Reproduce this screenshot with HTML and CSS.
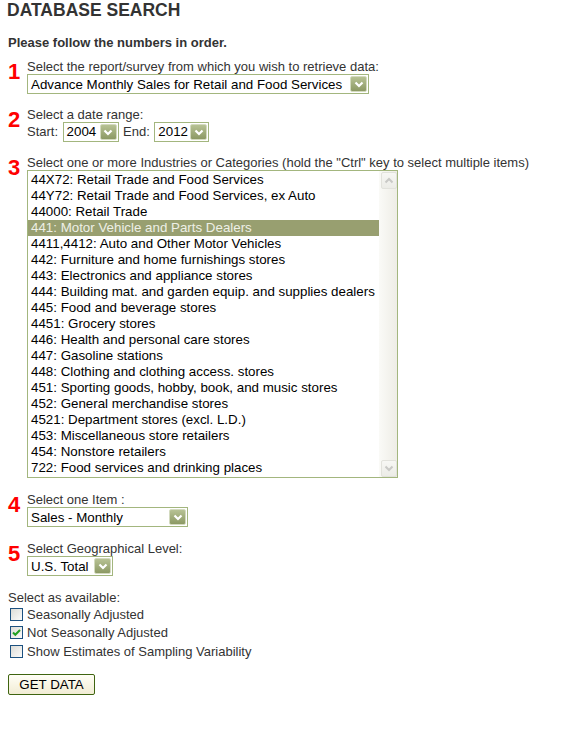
FILE: index.html
```html
<!DOCTYPE html>
<html>
<head>
<meta charset="utf-8">
<title>Database Search</title>
<link rel="stylesheet" href="styles.css">
</head>
<body>
<h1 class="title">DATABASE SEARCH</h1>
<p class="intro">Please follow the numbers in order.</p>

<div class="step">
  <span class="num">1</span>
  <div class="step-body">
    <div class="label">Select the report/survey from which you wish to retrieve data:</div>
    <div class="select w-report">
      <span class="val">Advance Monthly Sales for Retail and Food Services</span>
      <span class="arrow"><svg width="10" height="7" viewBox="0 0 10 7"><path d="M1.5 1.5 L5 5 L8.5 1.5" fill="none" stroke="#fff" stroke-width="2.2"/></svg></span>
    </div>
  </div>
</div>

<div class="step">
  <span class="num">2</span>
  <div class="step-body">
    <div class="label">Select a date range:</div>
    <div class="date-row">
      <span class="label-inline">Start:</span>
      <div class="select w-year">
        <span class="val">2004</span>
        <span class="arrow"><svg width="10" height="7" viewBox="0 0 10 7"><path d="M1.5 1.5 L5 5 L8.5 1.5" fill="none" stroke="#fff" stroke-width="2.2"/></svg></span>
      </div>
      <span class="label-inline">End:</span>
      <div class="select w-year2">
        <span class="val">2012</span>
        <span class="arrow"><svg width="10" height="7" viewBox="0 0 10 7"><path d="M1.5 1.5 L5 5 L8.5 1.5" fill="none" stroke="#fff" stroke-width="2.2"/></svg></span>
      </div>
    </div>
  </div>
</div>

<div class="step">
  <span class="num">3</span>
  <div class="step-body">
    <div class="label">Select one or more Industries or Categories (hold the "Ctrl" key to select multiple items)</div>
    <div class="listbox">
      <ul class="options">
        <li>44X72: Retail Trade and Food Services</li>
        <li>44Y72: Retail Trade and Food Services, ex Auto</li>
        <li>44000: Retail Trade</li>
        <li class="selected">441: Motor Vehicle and Parts Dealers</li>
        <li>4411,4412: Auto and Other Motor Vehicles</li>
        <li>442: Furniture and home furnishings stores</li>
        <li>443: Electronics and appliance stores</li>
        <li>444: Building mat. and garden equip. and supplies dealers</li>
        <li>445: Food and beverage stores</li>
        <li>4451: Grocery stores</li>
        <li>446: Health and personal care stores</li>
        <li>447: Gasoline stations</li>
        <li>448: Clothing and clothing access. stores</li>
        <li>451: Sporting goods, hobby, book, and music stores</li>
        <li>452: General merchandise stores</li>
        <li>4521: Department stores (excl. L.D.)</li>
        <li>453: Miscellaneous store retailers</li>
        <li>454: Nonstore retailers</li>
        <li>722: Food services and drinking places</li>
      </ul>
      <div class="scrollbar">
        <span class="sb-btn"><svg width="10" height="7" viewBox="0 0 10 7"><path d="M1.5 5.5 L5 2 L8.5 5.5" fill="none" stroke="#c9c9c6" stroke-width="2"/></svg></span>
        <span class="sb-track"></span>
        <span class="sb-btn"><svg width="10" height="7" viewBox="0 0 10 7"><path d="M1.5 1.5 L5 5 L8.5 1.5" fill="none" stroke="#c9c9c6" stroke-width="2"/></svg></span>
      </div>
    </div>
  </div>
</div>

<div class="step step-after-list">
  <span class="num">4</span>
  <div class="step-body">
    <div class="label">Select one Item :</div>
    <div class="select w-item">
      <span class="val">Sales - Monthly</span>
      <span class="arrow"><svg width="10" height="7" viewBox="0 0 10 7"><path d="M1.5 1.5 L5 5 L8.5 1.5" fill="none" stroke="#fff" stroke-width="2.2"/></svg></span>
    </div>
  </div>
</div>

<div class="step step-after-list">
  <span class="num">5</span>
  <div class="step-body">
    <div class="label">Select Geographical Level:</div>
    <div class="select w-geo">
      <span class="val">U.S. Total</span>
      <span class="arrow"><svg width="10" height="7" viewBox="0 0 10 7"><path d="M1.5 1.5 L5 5 L8.5 1.5" fill="none" stroke="#fff" stroke-width="2.2"/></svg></span>
    </div>
  </div>
</div>

<div class="available">
  <div class="label">Select as available:</div>
  <div class="check-row"><span class="checkbox"></span><span>Seasonally Adjusted</span></div>
  <div class="check-row"><span class="checkbox checked"><svg width="11" height="11" viewBox="0 0 11 11"><path d="M2 5.5 L4.3 7.8 L9 3" fill="none" stroke="#21a121" stroke-width="2"/></svg></span><span>Not Seasonally Adjusted</span></div>
  <div class="check-row"><span class="checkbox"></span><span>Show Estimates of Sampling Variability</span></div>
</div>

<button class="get-data" type="button">GET DATA</button>
</body>
</html>
```

FILE: styles.css
```css
html, body {
  margin: 0;
  padding: 0;
  background: #fff;
}

body {
  padding: 0 8px;
  font-family: "Liberation Sans", Arial, sans-serif;
  font-size: 13px;
  color: #333;
}

.title {
  margin: 0 0 0 -1px;
  font-size: 17.5px;
  line-height: 20px;
  font-weight: bold;
  color: #333;
}

.intro {
  margin: 15px 0 0;
  font-size: 13px;
  line-height: 15px;
  font-weight: bold;
}

.step {
  display: flex;
  margin-top: 13px;
}

.step:first-of-type {
  margin-top: 9px;
}

.step-after-list {
  margin-top: 14px;
}

.num {
  width: 19px;
  flex: none;
  margin-top: 2px;
  font-size: 22px;
  line-height: 22px;
  font-weight: bold;
  color: #f00;
}

.step-body {
  display: flex;
  flex-direction: column;
  align-items: flex-start;
}

.label {
  line-height: 15px;
}

.date-row {
  display: flex;
  align-items: center;
  gap: 4.5px;
  line-height: 20px;
}

.select {
  display: flex;
  align-items: center;
  justify-content: space-between;
  box-sizing: border-box;
  height: 20px;
  border: 1px solid #a3b67e;
  background: #fff;
  padding: 0 1px 0 3px;
  font-size: 13.33px;
  color: #000;
}

.w-report { width: 342px; }
.w-year { width: 56px; }
.w-year2 { width: 55px; }
.w-item { width: 161px; }
.w-geo { width: 86px; }

.arrow {
  display: flex;
  align-items: center;
  justify-content: center;
  box-sizing: border-box;
  width: 17px;
  height: 16px;
  border: 1px solid #d3dabf;
  border-radius: 2px;
  background: linear-gradient(#b7c294, #8c9964);
}

.listbox {
  display: flex;
  box-sizing: border-box;
  width: 371px;
  height: 308px;
  border: 1px solid #a3b67e;
  background: #fff;
}

.options {
  list-style: none;
  margin: 0;
  padding: 1px 0 0;
  flex: 1;
  font-size: 13.33px;
  line-height: 16px;
  color: #000;
}

.options li {
  height: 16px;
  padding-left: 3px;
  white-space: nowrap;
}

.options li.selected {
  background: #989f70;
  color: #eef0e6;
}

.scrollbar {
  display: flex;
  flex-direction: column;
  align-items: center;
  width: 18px;
  padding: 1px 0 0 1px;
  box-sizing: border-box;
  background: linear-gradient(to right, #fafaf7, #eeede6);
}

.sb-btn {
  display: flex;
  align-items: center;
  justify-content: center;
  box-sizing: border-box;
  width: 16px;
  height: 17px;
  border: 1px solid #e2e2dc;
  border-radius: 2px;
  background: linear-gradient(#f7f7f4, #ecece7);
}

.sb-track {
  flex: 1;
}

.available {
  margin-top: 14px;
}

.check-row {
  display: flex;
  align-items: center;
  height: 18.5px;
  gap: 4px;
}

.checkbox {
  display: flex;
  align-items: center;
  justify-content: center;
  box-sizing: border-box;
  width: 13px;
  height: 13px;
  margin-left: 2px;
  border: 1px solid #1c5180;
  background: linear-gradient(135deg, #dcdcd7, #fbfbfa);
}

.get-data {
  display: block;
  box-sizing: border-box;
  width: 87px;
  height: 21px;
  margin-top: 13px;
  padding: 0;
  border: 1px solid #3f6410;
  border-radius: 2px;
  background: linear-gradient(#fffef6, #f1ecd4);
  font-family: "Liberation Sans", Arial, sans-serif;
  font-size: 13.33px;
  color: #000;
}
```
